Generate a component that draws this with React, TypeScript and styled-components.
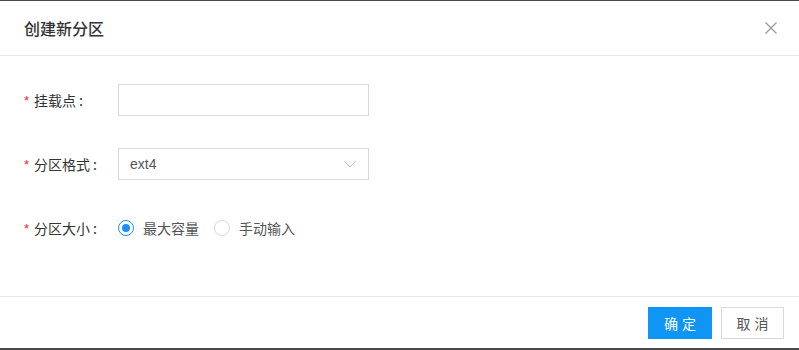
import React from 'react';
import styled, { createGlobalStyle } from 'styled-components';

const GlobalStyle = createGlobalStyle`
  html, body {
    margin: 0;
    padding: 0;
    background: #fff;
  }
  body {
    font-family: "Noto Sans CJK SC", "Noto Sans", sans-serif;
  }
`;

const Modal = styled.div`
  width: 799px;
  height: 350px;
  box-sizing: border-box;
  border-top: 1px solid #4a4a4a;
  border-bottom: 2px solid #4a4a4a;
  display: flex;
  flex-direction: column;
  background: #fff;
`;

const Header = styled.div`
  height: 55px;
  box-sizing: border-box;
  border-bottom: 1px solid #e8e8e8;
  display: flex;
  align-items: center;
  justify-content: space-between;
  padding: 0 21px 0 24px;
`;

const Title = styled.div`
  font-size: 16px;
  color: #333;
  font-weight: 500;
`;

const Close = styled.button`
  border: none;
  background: none;
  padding: 0;
  width: 14px;
  height: 14px;
  display: flex;
  cursor: pointer;
`;

const Body = styled.div`
  flex: 1;
  padding: 28px 24px 0;
  display: flex;
  flex-direction: column;
  gap: 32px;
`;

const Row = styled.div`
  display: flex;
  align-items: center;
  height: 32px;
`;

const Label = styled.div`
  width: 94px;
  font-size: 14px;
  color: #333;
  display: flex;
  align-items: center;
`;

const Star = styled.span`
  color: #f5222d;
  margin-right: 5px;
  font-family: "Liberation Sans", sans-serif;
  font-size: 13px;
`;

const Colon = styled.span`
  margin-left: 3px;
`;

const Input = styled.input`
  width: 251px;
  height: 32px;
  box-sizing: border-box;
  border: 1px solid #d9d9d9;
  outline: none;
  padding: 0 11px;
  font-size: 14px;
`;

const Select = styled.div`
  width: 251px;
  height: 32px;
  box-sizing: border-box;
  border: 1px solid #d9d9d9;
  padding: 0 12px 0 11px;
  display: flex;
  align-items: center;
  justify-content: space-between;
  font-size: 14px;
  color: #555;
  font-family: "Liberation Sans", "Noto Sans CJK SC", sans-serif;
`;

const RadioGroup = styled.div`
  display: flex;
  align-items: center;
  gap: 15px;
`;

const RadioItem = styled.label`
  display: flex;
  align-items: center;
  gap: 9px;
  font-size: 14px;
  color: #555;
`;

const RadioCircle = styled.span<{ $checked?: boolean }>`
  width: 16px;
  height: 16px;
  box-sizing: border-box;
  border-radius: 50%;
  border: 1px solid ${p => (p.$checked ? '#1890ff' : '#d9d9d9')};
  display: flex;
  align-items: center;
  justify-content: center;
  &::after {
    content: '';
    width: 8px;
    height: 8px;
    border-radius: 50%;
    background: #1890ff;
    display: ${p => (p.$checked ? 'block' : 'none')};
  }
`;

const Footer = styled.div`
  height: 52px;
  box-sizing: border-box;
  border-top: 1px solid #e8e8e8;
  display: flex;
  justify-content: flex-end;
  align-items: flex-start;
  padding: 10px 15px 0 0;
  gap: 9px;
`;

const Button = styled.button<{ $primary?: boolean }>`
  height: 32px;
  width: ${p => (p.$primary ? '64px' : '63px')};
  box-sizing: border-box;
  font-family: "Noto Sans CJK SC", sans-serif;
  font-size: 14px;
  letter-spacing: 4px;
  text-indent: 4px;
  border: 1px solid ${p => (p.$primary ? '#0f96f5' : '#d9d9d9')};
  background: ${p => (p.$primary ? '#0f96f5' : '#fff')};
  color: ${p => (p.$primary ? '#fff' : '#555')};
  cursor: pointer;
  padding: 0;
`;

function App() {
  return (
    <>
      <GlobalStyle />
      <Modal>
        <Header>
          <Title>创建新分区</Title>
          <Close aria-label="close">
            <svg width="14" height="14" viewBox="0 0 14 14">
              <path d="M1.5 1.5 L12.5 12.5 M12.5 1.5 L1.5 12.5" stroke="#999" strokeWidth="1.3" fill="none" />
            </svg>
          </Close>
        </Header>
        <Body>
          <Row>
            <Label>
              <Star>*</Star>挂载点<Colon>:</Colon>
            </Label>
            <Input />
          </Row>
          <Row>
            <Label>
              <Star>*</Star>分区格式<Colon>:</Colon>
            </Label>
            <Select>
              <span>ext4</span>
              <svg width="12" height="7" viewBox="0 0 12 7">
                <path d="M0.5 0.5 L6 6 L11.5 0.5" stroke="#bbb" strokeWidth="1" fill="none" />
              </svg>
            </Select>
          </Row>
          <Row>
            <Label>
              <Star>*</Star>分区大小<Colon>:</Colon>
            </Label>
            <RadioGroup>
              <RadioItem>
                <RadioCircle $checked />
                最大容量
              </RadioItem>
              <RadioItem>
                <RadioCircle />
                手动输入
              </RadioItem>
            </RadioGroup>
          </Row>
        </Body>
        <Footer>
          <Button $primary>确定</Button>
          <Button>取消</Button>
        </Footer>
      </Modal>
    </>
  );
}

export default App;
